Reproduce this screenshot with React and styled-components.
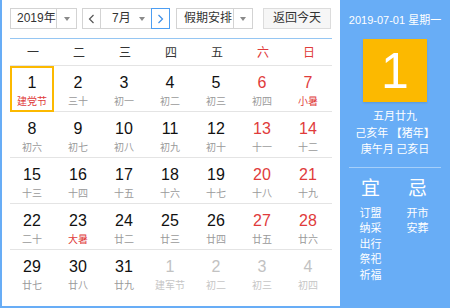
import React from "react";
import styled, { createGlobalStyle } from "styled-components";

const Global = createGlobalStyle`
  html, body { margin: 0; padding: 0; background: #fff; }
  body { font-family: "Liberation Sans", "Noto Sans CJK SC", sans-serif; }
`;

const BLUE = "#68adf6";
const RED = "#e03b3b";
const ORANGE = "#fcb900";

const Widget = styled.div`
  display: flex;
  width: 450px;
  height: 308px;
  box-sizing: border-box;
  border-left: 2px solid ${BLUE};
  border-bottom: 2px solid ${BLUE};
  overflow: hidden;
`;

const Main = styled.div`
  width: 338px;
  box-sizing: border-box;
  padding: 8px 8px 0 8px;
  display: flex;
  flex-direction: column;
`;

const Toolbar = styled.div`
  display: flex;
  align-items: stretch;
  height: 21px;
  font-family: "Liberation Sans", "Noto Sans CJK SC", sans-serif;
  font-size: 12px;
  color: #333;
  white-space: nowrap;
`;

const Select = styled.div`
  display: flex;
  width: ${(p) => p.$w}px;
  box-sizing: border-box;
  border: 1px solid #d3d3d3;
  background: #fff;
  margin-left: ${(p) => p.$ml || 0}px;
`;

const SelText = styled.div`
  flex: 1;
  min-width: 0;
  display: flex;
  align-items: center;
  padding-left: ${(p) => p.$pl ?? 8}px;
  line-height: 19px;
`;

const ArrowBox = styled.div`
  width: ${(p) => p.$w || 19}px;
  flex: none;
  display: flex;
  align-items: center;
  justify-content: center;
  border-left: ${(p) => (p.$noDivider ? "none" : "1px solid #d3d3d3")};
  &::after {
    content: "";
    border-left: 3px solid transparent;
    border-right: 3px solid transparent;
    border-top: 4px solid #8a8a8a;
  }
`;

const NavBtn = styled.div`
  width: 19px;
  box-sizing: border-box;
  display: flex;
  align-items: center;
  justify-content: center;
  border: 1px solid ${(p) => (p.$active ? "#4d9ef2" : "#d3d3d3")};
  background: #fff;
  margin-left: ${(p) => p.$ml || 0}px;
`;

const MonthField = styled.div`
  display: flex;
  width: 50px;
  box-sizing: border-box;
  border-top: 1px solid #d3d3d3;
  border-bottom: 1px solid #d3d3d3;
`;

const TodayBtn = styled.div`
  width: 68px;
  margin-left: 10px;
  box-sizing: border-box;
  border: 1px solid #dcdcdc;
  background: #f6f6f6;
  display: flex;
  align-items: center;
  justify-content: center;
  line-height: 19px;
`;

const BlueRule = styled.div`
  height: 1px;
  background: #95c6f3;
  margin-top: 9px;
  width: 322px;
`;

const WeekHead = styled.div`
  display: grid;
  grid-template-columns: repeat(7, 46px);
  height: 26px;
  align-items: center;
  font-family: "Noto Sans CJK SC", sans-serif;
  font-size: 12px;
  border-bottom: 1px solid #e4e4e4;
`;

const WeekDay = styled.div`
  text-align: center;
  color: ${(p) => (p.$weekend ? RED : "#333")};
  line-height: 26px;
`;

const Row = styled.div`
  display: grid;
  grid-template-columns: repeat(7, 46px);
  height: 46px;
  box-sizing: border-box;
  border-bottom: ${(p) => (p.$last ? "none" : "1px solid #e4e4e4")};
`;

const Cell = styled.div`
  box-sizing: border-box;
  border: 2px solid ${(p) => (p.$sel ? ORANGE : "transparent")};
  width: 44px;
  height: ${(p) => (p.$sel ? 46 : 45)}px;
  display: flex;
  flex-direction: column;
  align-items: center;
  padding-top: 6px;
  margin-right: 2px;
`;

const DayNum = styled.div`
  font-family: "Liberation Sans", sans-serif;
  font-size: 16px;
  line-height: 18px;
  color: ${(p) => (p.$other ? "#c2c2c2" : p.$weekend ? RED : "#111")};
`;

const Lunar = styled.div`
  font-family: "Noto Sans CJK SC", sans-serif;
  font-size: 10px;
  line-height: 12px;
  margin-top: 3px;
  white-space: nowrap;
  color: ${(p) =>
    p.$other ? "#c6c6c6" : p.$festival ? RED : "#9a9a9a"};
`;

const Side = styled.div`
  width: 110px;
  background: ${BLUE};
  color: #fff;
  display: flex;
  flex-direction: column;
  align-items: center;
  font-family: "Liberation Sans", "Noto Sans CJK SC", sans-serif;
`;

const DateLine = styled.div`
  font-size: 11px;
  line-height: 14px;
  margin-top: 13px;
  white-space: nowrap;
`;

const BigDay = styled.div`
  width: 64px;
  height: 63px;
  margin-top: 12px;
  background: ${ORANGE};
  display: flex;
  align-items: center;
  justify-content: center;
  font-family: "Liberation Sans", sans-serif;
  font-size: 50px;
  color: #fff;
  box-shadow: 0 1px 2px rgba(0, 0, 0, 0.12);
`;

const LunarInfo = styled.div`
  margin-top: 5px;
  font-family: "Noto Sans CJK SC", sans-serif;
  font-size: 11px;
  line-height: 16.5px;
  text-align: center;
  white-space: pre;
`;

const SideRule = styled.div`
  width: 92px;
  height: 1px;
  background: #a5cffa;
  margin-top: 10px;
`;

const YiJi = styled.div`
  display: flex;
  gap: 23px;
  margin-top: 7px;
  padding-right: 2px;
  font-family: "Noto Sans CJK SC", sans-serif;
`;

const YiCol = styled.div`
  display: flex;
  flex-direction: column;
  align-items: center;
  width: 24px;
`;

const YiTitle = styled.div`
  font-size: 19px;
  line-height: 24px;
  margin-bottom: 6px;
`;

const YiItem = styled.div`
  font-size: 11px;
  line-height: 15.5px;
  white-space: nowrap;
`;

const Chevron = ({ dir, color }) => (
  <svg width="7" height="10" viewBox="0 0 7 10">
    <polyline
      points={dir === "left" ? "5.5,1 1.5,5 5.5,9" : "1.5,1 5.5,5 1.5,9"}
      fill="none"
      stroke={color}
      strokeWidth="1.2"
    />
  </svg>
);

const weeks = [
  [
    ["1", "建党节", { sel: true, fest: true }],
    ["2", "三十"],
    ["3", "初一"],
    ["4", "初二"],
    ["5", "初三"],
    ["6", "初四"],
    ["7", "小暑", { fest: true }],
  ],
  [
    ["8", "初六"],
    ["9", "初七"],
    ["10", "初八"],
    ["11", "初九"],
    ["12", "初十"],
    ["13", "十一"],
    ["14", "十二"],
  ],
  [
    ["15", "十三"],
    ["16", "十四"],
    ["17", "十五"],
    ["18", "十六"],
    ["19", "十七"],
    ["20", "十八"],
    ["21", "十九"],
  ],
  [
    ["22", "二十"],
    ["23", "大暑", { fest: true }],
    ["24", "廿二"],
    ["25", "廿三"],
    ["26", "廿四"],
    ["27", "廿五"],
    ["28", "廿六"],
  ],
  [
    ["29", "廿七"],
    ["30", "廿八"],
    ["31", "廿九"],
    ["1", "建军节", { other: true }],
    ["2", "初二", { other: true }],
    ["3", "初三", { other: true }],
    ["4", "初四", { other: true }],
  ],
];

const weekNames = ["一", "二", "三", "四", "五", "六", "日"];

export default function App() {
  return (
    <>
      <Global />
      <Widget>
        <Main>
          <Toolbar>
            <Select $w={67}>
              <SelText $pl={6}>2019年</SelText>
              <ArrowBox />
            </Select>
            <NavBtn $ml={5}>
              <Chevron dir="left" color="#555" />
            </NavBtn>
            <MonthField>
              <SelText $pl={11}>7月</SelText>
              <ArrowBox $noDivider $w={18} />
            </MonthField>
            <NavBtn $active>
              <Chevron dir="right" color="#3d8fe8" />
            </NavBtn>
            <Select $w={77} $ml={6}>
              <SelText $pl={7}>假期安排</SelText>
              <ArrowBox $w={18} />
            </Select>
            <TodayBtn>返回今天</TodayBtn>
          </Toolbar>
          <BlueRule />
          <WeekHead>
            {weekNames.map((w, i) => (
              <WeekDay key={w} $weekend={i >= 5}>
                {w}
              </WeekDay>
            ))}
          </WeekHead>
          {weeks.map((week, wi) => (
            <Row key={wi} $last={wi === weeks.length - 1}>
              {week.map(([d, l, o = {}], di) => (
                <Cell key={di} $sel={o.sel}>
                  <DayNum $weekend={di >= 5} $other={o.other}>
                    {d}
                  </DayNum>
                  <Lunar $festival={o.fest} $other={o.other}>
                    {l}
                  </Lunar>
                </Cell>
              ))}
            </Row>
          ))}
        </Main>
        <Side>
          <DateLine>2019-07-01 星期一</DateLine>
          <BigDay>1</BigDay>
          <LunarInfo>{"五月廿九\n己亥年 【猪年】\n庚午月 己亥日"}</LunarInfo>
          <SideRule />
          <YiJi>
            <YiCol>
              <YiTitle>宜</YiTitle>
              <YiItem>订盟</YiItem>
              <YiItem>纳采</YiItem>
              <YiItem>出行</YiItem>
              <YiItem>祭祀</YiItem>
              <YiItem>祈福</YiItem>
            </YiCol>
            <YiCol>
              <YiTitle>忌</YiTitle>
              <YiItem>开市</YiItem>
              <YiItem>安葬</YiItem>
            </YiCol>
          </YiJi>
        </Side>
      </Widget>
    </>
  );
}
